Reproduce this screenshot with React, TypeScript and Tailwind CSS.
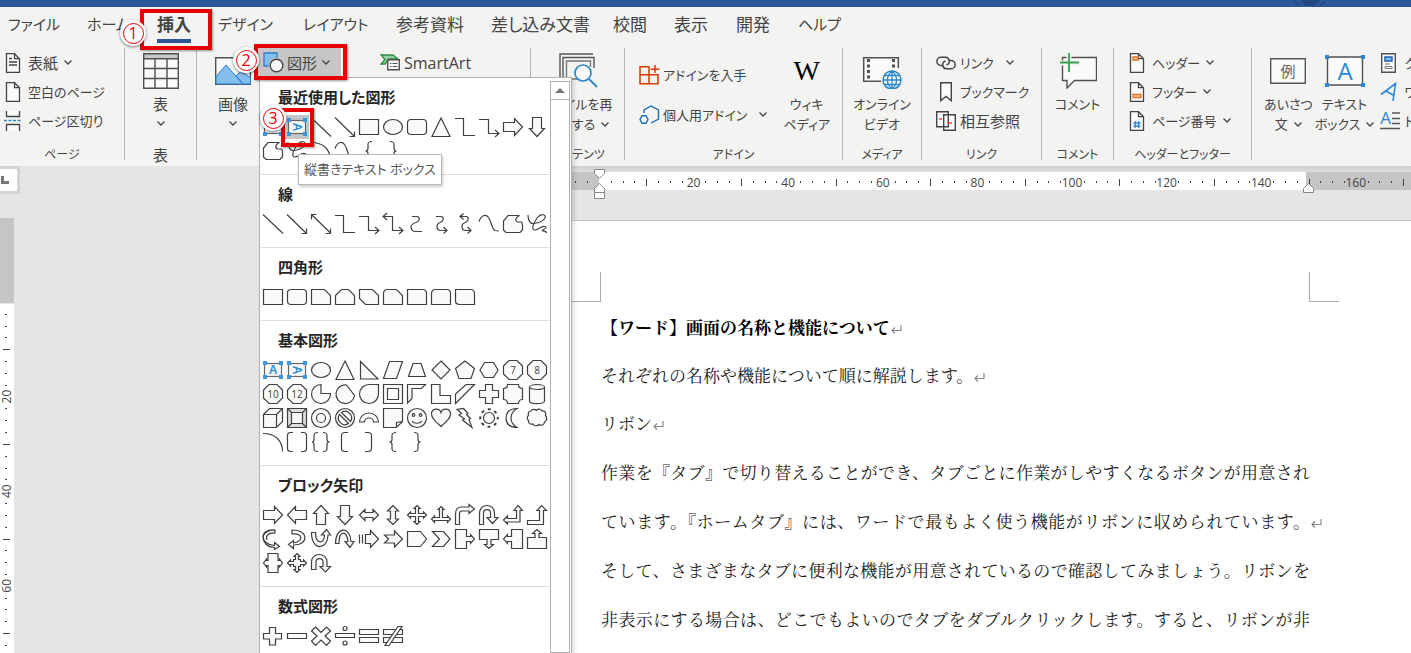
import React from "react";

const UI = "font-['Open_Sans','Noto_Sans_CJK_JP',sans-serif] [font-feature-settings:'palt']";

/* ---------- shape gallery ---------- */

const N = { fill: "none" };

const boxIcon = (vertical: boolean) => (
  <>
    <rect x="3.5" y="5.5" width="17" height="13" stroke="#666" fill="#f7f7f7" />
    <g fill="#3a96dd" stroke="none">
      <rect x="2" y="3" width="4" height="4" />
      <rect x="18" y="3" width="4" height="4" />
      <rect x="2" y="17" width="4" height="4" />
      <rect x="18" y="17" width="4" height="4" />
    </g>
    <text
      x="12"
      y="16"
      textAnchor="middle"
      fontSize="12"
      fontWeight="700"
      fill="#2b8fd6"
      stroke="none"
      fontFamily="Liberation Sans"
      transform={vertical ? "rotate(90 12 12)" : undefined}
    >
      A
    </text>
  </>
);

const OCT = "M8 2.5h8l5.5 5.5v8L16 21.5H8L2.5 16V8z";
const polyNum = (n: string) => (
  <>
    <path d={OCT} />
    <text x="12" y="15.5" textAnchor="middle" fontSize="10" fill="#444" stroke="none">
      {n}
    </text>
  </>
);

const S: Record<string, React.ReactNode> = {
  tb: boxIcon(false),
  vtb: boxIcon(true),
  line: <path {...N} d="M2 2.5l20 19" />,
  lineArrow: <path {...N} d="M2 2.5l19 18.5M21.5 16.5v5h-5" />,
  lineBoth: <path {...N} d="M3 3l18.5 18M21.5 16.5v5h-5M2.5 7.5v-5h5" />,
  rect: <path d="M2.5 4.5h19v15h-19z" />,
  oval: <ellipse cx="12" cy="12" rx="9.5" ry="7.5" />,
  round: <rect x="2.5" y="4.5" width="19" height="15" rx="3.5" />,
  tri: <path d="M12 3l9 18.500H3z" />,
  elbow: <path {...N} d="M2 3.5h8.500v17H22" />,
  elbowArrow: <path {...N} d="M2 4.500h9.500v14H21M18 15l4 3.500-4 3.500" />,
  elbowBoth: <path {...N} d="M3 4.500h8.500v14H21M18 15l4 3.500-4 3.500M6 1L2 4.500 6 8" />,
  curve: <path {...N} d="M7 4.500h5c3 0 3 4.500 0 5.500s-6 2-6 5 2 4.500 5 4.500h6" />,
  curveArrow: <path {...N} d="M7 4.500h5c3 0 3 4 0 5.500s-4 2-4 4.500 1 4 4 4h5M14.500 15l3.500 3.500-3.500 3" />,
  curveBoth: <path {...N} d="M8 4.500h5c3 0 3 4 0 5.500s-4 2-4 4.500 1 4 4 4h4M14.500 15l3.500 3.500-3.500 3M10.500 1.500L7 4.500l3.500 3" />,
  free: <path {...N} d="M2 9.500C4 3.500 8.500 1.500 11.500 5.500S15 17.500 18 18.500l4 .5" />,
  shapeFree: <path d="M7 3.500h11.500c-4 2-5 5-2 6.500h4c1.500 1 1 4 1 8l-2.500 2.500H5L2.500 18V9z" />,
  scribble: (
    <path {...N} d="M3 3c0 5 2 9 6 8.500s9-2 11-5.500c1.500-3.500-4-5-7.500-.5S5.500 18 9.500 18s6-4 10-3.500-1 3-2 4 3.500-.5 4 2.500" />
  ),
  arc: <path {...N} d="M2 3.500c12 0 19.500 6.500 19.500 18" />,
  lbrace: <path {...N} d="M15 2.500c-3 0-4 .5-4 3v4c0 1.500-1 2.500-2.500 2.500 1.500 0 2.500 1 2.500 2.500v4c0 2.500 1 3 4 3" />,
  rbrace: <path {...N} d="M9 2.500c3 0 4 .5 4 3v4c0 1.500 1 2.500 2.500 2.500-1.500 0-2.500 1-2.500 2.500v4c0 2.500-1 3-4 3" />,
  snip1: <path d="M2.500 4.500h13l6 6v9h-19z" />,
  snip2: <path d="M2.500 10.500l6-6h7l6 6v9h-19z" />,
  snipDiag: <path d="M2.500 4.500h13l6 6v9h-13l-6-6z" />,
  snipRound: <path d="M2.500 8.500q0-4 4-4h9l6 6v9h-19z" />,
  round1: <path d="M2.500 4.500h15q4 0 4 4v11h-19z" />,
  round2: <path d="M2.500 19.500v-11q0-4 4-4h11q4 0 4 4v11z" />,
  roundDiag: <path d="M2.500 4.500h15q4 0 4 4v11h-15q-4 0-4-4z" />,
  rtri: <path d="M3.500 3.500v17.500h17.500z" />,
  para: <path d="M8.500 3.500h13l-6 17h-13z" />,
  trap: <path d="M8 5.500h8l4.500 13h-17z" />,
  diamond: <path d="M12 3l9 9-9 9-9-9z" />,
  penta: <path d="M12 3l9.500 7.500L18 20.500H6L2.500 10.500z" />,
  hexa: <path d="M7.500 4.500h9l4.500 7.500-4.500 7.500h-9L3 12z" />,
  n7: polyNum("7"),
  n8: polyNum("8"),
  n10: polyNum("10"),
  n12: polyNum("12"),
  pie: <path d="M12 2.500a9.500 9.500 0 1 0 9.500 9H12z" />,
  chord: <path d="M13.500 3a9.300 9.300 0 1 0 8 10.500z" />,
  tear: <path d="M21.500 2.500H12A9.500 9.500 0 1 0 21.500 12z" />,
  frame: (
    <>
      <path d="M2.500 2.500h19v19h-19z" />
      <path d="M6.500 6.500h11v11h-11z" fill="#fff" />
    </>
  ),
  halfFrame: <path d="M2.500 2.500h18l-4 4H7v10l-4.500 4.500z" />,
  lshape: <path d="M2.500 2.500h8.500v11h10.500v8h-19z" />,
  stripe: <path d="M13 2.500h8.500L2.500 21.500V12z" />,
  cross: <path d="M8.500 2.500h7v6h6v7h-6v6h-7v-6h-6v-7h6z" />,
  plaque: <path d="M6.500 2.500h11q0 4 4 4v11q-4 0-4 4h-11q0-4-4-4v-11q4 0 4-4z" />,
  can: (
    <>
      <path d="M4.500 5v14c0 3.500 15 3.500 15 0V5" />
      <ellipse cx="12" cy="5" rx="7.500" ry="2.500" />
    </>
  ),
  cube: <path d="M2.500 8.500l6-6h13v13l-6 6h-13zM2.500 8.500h13v13M15.500 8.500l6-6" />,
  bevel: (
    <>
      <path d="M2.500 2.500h19v19h-19z" fill="#ddd" />
      <path d="M6.500 6.500h11v11h-11zM2.500 2.500l4 4M21.500 2.500l-4 4M2.500 21.500l4-4M21.500 21.500l-4-4" />
    </>
  ),
  donut: (
    <>
      <circle cx="12" cy="12" r="9.500" />
      <circle cx="12" cy="12" r="4.500" fill="#fff" />
    </>
  ),
  no: (
    <>
      <circle cx="12" cy="12" r="9.500" />
      <path d="M8.500 6.500a6.500 6.500 0 0 1 9 9zM6.500 8.500a6.500 6.500 0 0 0 9 9z" fill="#fff" />
    </>
  ),
  blockArc: <path d="M2.500 16a9.500 9 0 0 1 19 0h-5a4.500 4 0 0 0-9 0z" />,
  fold: <path d="M2.500 2.500h19v13l-6 6h-13zM15.500 21.500v-5l6-1" />,
  smile: (
    <>
      <circle cx="12" cy="12" r="9.500" />
      <circle cx="8.500" cy="9" r="1.300" />
      <circle cx="15.500" cy="9" r="1.300" />
      <path {...N} d="M7 15c2 3 8 3 10 0" />
    </>
  ),
  heart: <path d="M12 20.500C6 15 2.500 12 2.500 8c0-6 8-6.500 9.500-1.500C13.500 1.500 21.500 2 21.500 8c0 4-3.500 7-9.500 12.500z" />,
  bolt: <path d="M10.500 2.500l4.500 5-1.500 1 4 4-1.500 1 3 8-9.500-7.500 2-1-5.500-4 2.500-1.500L4 3.500z" />,
  sun: (
    <>
      <circle cx="12" cy="12" r="5.500" />
      <path
        {...N}
        strokeWidth="2"
        strokeDasharray="3 3.872"
        strokeDashoffset="1.500"
        d="M20.750 12A8.750 8.750 0 1 1 3.250 12A8.750 8.750 0 1 1 20.750 12"
      />
    </>
  ),
  moon: <path d="M16 2.500C7 2.500 5 8 5 12s2 9.500 11 9.500c-5-3-6-6-6-9.500s1-6.500 6-9.500z" />,
  cloud: (
    <path d="M6 5c1-2 4-2 5.500-.5 2-2 5-1.500 5.500.5 3-.5 4.500 2 3.500 4.500 2 2 1.500 5.500-1 6.500 0 3-3.500 4-5.500 2.500-2 2-5 1.500-6-.5-3 .5-5-1-4.500-3.500-2-1.500-1.500-4 0-5-1-2.500.5-4.500 2.500-4.500z" />
  ),
  brackets: <path {...N} d="M8 2.500H5.500q-3 0-3 3v13q0 3 3 3H8M16 2.500h2.500q3 0 3 3v13q0 3-3 3H16" />,
  braces: (
    <path {...N} d="M9 2.500c-3 0-4 .5-4 3v4c0 1.500-.5 2.500-2 2.500 1.500 0 2 1 2 2.500v4c0 2.500 1 3 4 3M14 2.500c3 0 4 .5 4 3v4c0 1.500.5 2.500 2.500 2.500-2 0-2.500 1-2.500 2.500v4c0 2.500-1 3-4 3" />
  ),
  lbracket: <path {...N} d="M15 2.500h-3q-3.500 0-3.500 3v13q0 3 3.500 3h3" />,
  rbracket: <path {...N} d="M8 2.500h3q3.500 0 3.500 3v13q0 3-3.500 3H8" />,
  aRight: <path d="M2.500 7.500h11v-4L21.500 12l-8 8.500v-4h-11z" />,
  aLeft: <path d="M21.500 7.500h-11v-4L2.500 12l8 8.500v-4h11z" />,
  aUp: <path d="M7.500 21.500v-11h-3L12 2.500l7.500 8h-3v11z" />,
  aDown: <path d="M7.500 2.500v11h-3l7.500 8 7.500-8h-3v-11z" />,
  aLR: <path d="M2.500 12L8 6.500v3h8v-3l5.500 5.500L16 17.500v-3H8v3z" />,
  aUD: <path d="M12 2.500L6.500 8h3v8h-3l5.500 5.500 5.500-5.500h-3V8h3z" />,
  aQuad: <path d="M12 2.500l3 3h-1.500v5h5V9l3 3-3 3v-1.500h-5v5H15l-3 3-3-3h1.500v-5h-5V15l-3-3 3-3v1.500h5v-5H9z" />,
  aTri: <path d="M12 3.500l3 3h-1.500v8h5V13l3 3-3 3.500v-2h-13v2l-3-3.500 3-3v1.500h5v-8H9z" />,
  aBent: <path d="M2.500 21.500V11c0-5 2-7 6-7H16V1.500L21.500 6 16 10.500V8H9c-2 0-2.500 1-2.500 3v10.500z" />,
  aU: <path d="M2.500 21.500V10c0-10 15-10 15 0v4.500h3.500l-5.500 6-5.500-6h3.500V10c0-4.500-7-4.500-7 0v11.500z" />,
  aLU: <path d="M2.500 17l4-4v2.500h9v-8h-2.500l4-5 4.500 5h-2.500v11.500H6.500V21z" />,
  aBU: <path d="M2.500 17.500h12v-10h-2.500l4.500-5 5 5h-3v14h-16z" />,
  cRight: <path d="M14 3C-1.500 3-1.500 17 13.500 18.500V15.500l5 4-5 3v-2C-1 20-3 1 14 3v3C6 5.500 4.500 10 6 13" />,
  cLeft: <path d="M7 3c17 0 17 15 1.500 15V21.500L3.500 17.500l5-4V16c11-2 9-10-1.500-9z" />,
  cUp: <path d="M2.500 5.500h4c0 12 9 12 9 2.500h-3l5-5.500 4 5.500h-2.500c0 15-16.500 17-16.500-2.500z" />,
  cDown: <path d="M2.500 16.500C2.500-1 17.500-1 18 14.500h3l-4 6-5-6h3C14 3 6 3 6 16.500z" />,
  aStriped: <path d="M2.500 7.500v9M5.500 7.500v9M8.500 7.500h5v-4l8 8.500-8 8.500v-4h-5z" />,
  aNotch: <path d="M3.500 8h10V4l8 8-8 8v-4h-10l4-4z" />,
  pentagonArrow: <path d="M2.500 4.500h13l6 7.500-6 7.500h-13z" />,
  chevronArrow: <path d="M3.500 4.500h11l6.500 7.500-6.500 7.500h-11l7-7.500z" />,
  coRight: <path d="M2.500 2.500h11v7h4V7.500l4 4.500-4 4.500v-2h-4v7h-11z" />,
  coDown: <path d="M2.500 2.500h19v10h-7.500v5h2.500l-4.500 4-4.500-4H10v-5H2.500z" />,
  coLeft: <path d="M21.500 2.500h-11v7h-4V7.500L2.500 12l4 4.500v-2h4v7h11z" />,
  coUp: <path d="M2.500 21.500h19v-11H14v-4h2.500l-4.500-4-4.500 4H10v4H2.500z" />,
  coLR: <path d="M7 2.500h10v7h1.500V8l3 4-3 4v-1.500H17v7H7v-7H5.500V16l-3-4 3-4v1.500H7z" />,
  coQuad: <path d="M12 2.500l3 3h-1.500v3h2v2h3V9l3 3-3 3v-1.500h-3v2h-2v3H15l-3 3-3-3h1.500v-3h-2v-2h-3V15l-3-3 3-3v1.500h3v-2h2v-3H9z" />,
  cu: <path d="M2.500 18.500V11c0-10 15.500-10 15.500 0v4.500h3.500l-5 5.500-5.500-5.500h3V11c0-4.500-7-4.500-7 0v7.500z" />,
  mPlus: <path d="M8.500 3.500h6v6h6v5.500h-6v6h-6v-6h-6V9.500h6z" />,
  mMinus: <path d="M2.500 9.500h19v5h-19z" />,
  mTimes: <path d="M6.500 3L12 8.500 17.500 3l4 4L16 12l5.500 5-4 4.500L12 16l-5.500 5.500-4-4.500L8 12 2.500 7z" />,
  mDiv: (
    <>
      <path d="M2.500 9.500h19v4h-19z" />
      <circle cx="12" cy="4.500" r="2" />
      <circle cx="12" cy="19" r="2" />
    </>
  ),
  mEq: <path d="M2.500 5.500h19v5h-19zM2.500 13.500h19v5h-19z" />,
  mNeq: (
    <>
      <path d="M2.500 5.500h19v5h-19zM2.500 13.500h19v5h-19z" />
      <path d="M17 2.500h4L8 21.500H4z" />
    </>
  ),
};

const SECTIONS: { title: string; rows: string }[] = [
  {
    title: "最近使用した図形",
    rows: "tb vtb line lineArrow rect oval round tri elbow elbowArrow aRight aDown shapeFree scribble arc free lbrace rbrace",
  },
  {
    title: "線",
    rows: "line lineArrow lineBoth elbow elbowArrow elbowBoth curve curveArrow curveBoth free shapeFree scribble",
  },
  { title: "四角形", rows: "rect round snip1 snip2 snipDiag snipRound round1 round2 roundDiag" },
  {
    title: "基本図形",
    rows: "tb vtb oval tri rtri para trap diamond penta hexa n7 n8 n10 n12 pie chord tear frame halfFrame lshape stripe cross plaque can cube bevel donut no blockArc fold smile heart bolt sun moon cloud arc brackets braces lbracket rbracket lbrace rbrace",
  },
  {
    title: "ブロック矢印",
    rows: "aRight aLeft aUp aDown aLR aUD aQuad aTri aBent aU aLU aBU cRight cLeft cUp cDown aStriped aNotch pentagonArrow chevronArrow coRight coDown coLeft coUp coLR coQuad cu",
  },
  { title: "数式図形", rows: "mPlus mMinus mTimes mDiv mEq mNeq" },
];

function ShapePanel() {
  return (
    <div className="absolute bottom-0 left-[259px] top-[77px] z-10 flex w-[313px] overflow-hidden border border-b-0 border-[#b3b3b3] bg-white shadow-[2px_2px_4px_rgba(0,0,0,0.15)]">
      <div className="mr-px w-[289px] shrink-0 pl-px">
        {SECTIONS.map((s, i) => (
          <section
            key={s.title}
            className={"pb-[11px] pt-[7px] " + (i ? "border-t border-[#dcdcdc]" : "")}
          >
            <h3 className="h-6 pl-[17px] text-[15px] font-bold leading-6 text-[#262626]">{s.title}</h3>
            <div className="mt-[6px] grid grid-cols-12">
              {s.rows.split(" ").map((k, j) => (
                <button
                  key={j}
                  aria-label={k}
                  className={"h-6 w-6 " + (i === 0 && j === 1 ? "bg-[#c6c6c6]" : "")}
                >
                  <svg width="24" height="24" viewBox="0 0 24 24" fill="#fafafa" stroke="#404040" strokeWidth="1.200">
                    {S[k]}
                  </svg>
                </button>
              ))}
            </div>
          </section>
        ))}
      </div>
      <div className="mt-[3px] flex w-5 flex-col border border-[#b0b0b0]">
        <button aria-label="上へスクロール" className="flex h-[18px] items-center justify-center border-b border-[#b0b0b0]">
          <svg width="10" height="5" viewBox="0 0 10 5">
            <path d="M5 0l5 5H0z" fill="#777" />
          </svg>
        </button>
      </div>
    </div>
  );
}

/* ---------- ribbon ---------- */

const Chevron = () => (
  <svg className="shrink-0" width="8" height="5" viewBox="0 0 8 5" fill="none" stroke="#444" strokeWidth="1.300">
    <path d="M.5.5L4 4 7.500.5" />
  </svg>
);

function Page({ children }: { children?: React.ReactNode }) {
  return (
    <svg width="18" height="20" viewBox="0 0 18 20" fill="#fafafa" stroke="#444" strokeWidth="1.300">
      <path d="M2.500.7h8l5 5v13.600h-13zM10.500.7v5h5" />
      {children}
    </svg>
  );
}

type SmallProps = { icon: React.ReactNode; text: string; chevron?: boolean; wide?: boolean; large?: boolean };

function Small({ icon, text, chevron, wide, large }: SmallProps) {
  return (
    <button
      className={"flex h-[29px] items-center whitespace-nowrap leading-5 " + (large ? "text-[15px]" : "text-[13px]")}
    >
      <span className="flex w-6 shrink-0 items-center">{icon}</span>
      {text}
      {chevron && (
        <span className={wide ? "ml-3" : "ml-[6px]"}>
          <Chevron />
        </span>
      )}
    </button>
  );
}

type BigProps = { icon: React.ReactNode; lines: string[]; chevron?: boolean; below?: boolean };

function Big({ icon, lines, chevron, below }: BigProps) {
  return (
    <button
      className={"flex flex-col items-center whitespace-nowrap leading-5 " + (below ? "text-[15px]" : "text-[13px]")}
    >
      <span className="flex h-[46px] items-center justify-center">{icon}</span>
      {lines.map((l, i) => (
        <span key={l} className="flex h-5 items-center gap-[6px]">
          {l}
          {chevron && i === lines.length - 1 && <Chevron />}
        </span>
      ))}
      {below && (
        <span className="flex h-[18px] items-center">
          <Chevron />
        </span>
      )}
    </button>
  );
}

type GroupProps = { w: string; label: string; children: React.ReactNode; last?: boolean; kanji?: boolean };

function Group({ w, label, children, last, kanji }: GroupProps) {
  return (
    <section className={"flex h-[112px] shrink-0 flex-col " + (last ? "" : "border-r border-[#b4b4b4] ") + w}>
      <div className="flex h-[97px] shrink-0">{children}</div>
      <div className={"shrink-0 whitespace-nowrap text-center leading-5 " + (kanji ? "text-[15px]" : "text-[12px]")}>
        {label}
      </div>
    </section>
  );
}

const TableIcon = () => (
  <svg width="36" height="36" viewBox="0 0 36 36" fill="#fafafa" stroke="#505050" strokeWidth="1.400">
    <path d="M.7.700h34.600v34.600H.7z" />
    <path d="M.7.700h34.600v5H.7z" fill="#c8c8c8" />
    <path d="M.7 15.500h34.600M.7 25.500h34.600M12 5.700v29.600M24 5.700v29.600" />
  </svg>
);

const PictureIcon = () => (
  <svg width="36" height="28" viewBox="0 0 36 28">
    <path d="M.7.700h34.600v26.600H.7z" fill="#fafafa" stroke="#505050" strokeWidth="1.400" />
    <path d="M1 19.500L11 8l17 19H1zM21 19l5-5 9.500 7v6H28z" fill="#83beec" stroke="#2b7cd3" />
  </svg>
);

const ShapesIcon = () => (
  <svg width="21" height="21" viewBox="0 0 21 21">
    <path d="M1 1h13v13H1z" fill="#83beec" stroke="#2b7cd3" strokeWidth="1.300" />
    <circle cx="13.500" cy="13.500" r="8" fill="#c6c6c6" />
    <circle cx="13.500" cy="13.500" r="6.300" fill="#fafafa" stroke="#444" strokeWidth="1.400" />
  </svg>
);

const SmartArtIcon = () => (
  <svg width="20" height="17" viewBox="0 0 20 17">
    <path d="M1 1h12l5 4H9l-4 5H1l4-4.500z" fill="#8fd3a0" stroke="#2e8b46" strokeWidth="1.300" />
    <path d="M7.700 5.700h11.600v10H7.700z" fill="#fafafa" stroke="#505050" strokeWidth="1.400" />
    <path d="M10 9.500h1.500M12.500 9.500h5M10 12.500h1.500M12.500 12.500h5" stroke="#505050" />
  </svg>
);

const ReuseIcon = () => (
  <svg width="40" height="36" viewBox="0 0 40 36" fill="none" stroke="#555" strokeWidth="1.400">
    <path d="M2 24V1h33M5 24V4.500h31V15" />
    <path d="M8.500 24V8h24v6M8.500 26h13" stroke="#777" />
    <circle cx="25" cy="20" r="8" fill="#fafafa" stroke="#2b88c8" strokeWidth="1.700" />
    <path d="M31 26l8 8" stroke="#2b88c8" strokeWidth="1.800" />
  </svg>
);

const AddinIcon = () => (
  <svg width="21" height="20" viewBox="0 0 21 20" fill="none" stroke="#d83b01" strokeWidth="1.500">
    <path d="M10.500 1.700H1v17h18v-9H1M10 1.700v17M16 0v8M11.500 4.200h9" />
  </svg>
);

const MyAddinIcon = () => (
  <svg width="21" height="20" viewBox="0 0 21 20" fill="none" stroke="#1a6fb8" strokeWidth="1.400">
    <path d="M5 8V5l7-4 7.500 4v9L12 18M3 10.700h4l2 3.800-2 3.800H3L1 14.500z" />
  </svg>
);

const VideoIcon = () => (
  <svg width="40" height="36" viewBox="0 0 40 36" fill="none">
    <path d="M19 28.300H1.700V4.700h34.600V15" stroke="#505050" strokeWidth="1.500" fill="#fafafa" />
    <path d="M6.500 6v22M31.500 6v9" stroke="#505050" strokeWidth="3" strokeDasharray="3 2.500" />
    <circle cx="30" cy="27" r="9" fill="#fafafa" stroke="#2b88c8" strokeWidth="1.500" />
    <path d="M21 27h18M23 22.500h14M23 31.500h14M30 18v18M30 18c-6 5-6 13 0 18M30 18c6 5 6 13 0 18" stroke="#2b88c8" strokeWidth="1.300" />
  </svg>
);

const LinkIcon = () => (
  <svg width="20" height="14" viewBox="0 0 20 14" fill="none" stroke="#444" strokeWidth="1.500">
    <path d="M7.500 9.500H5A4 4 0 0 1 5 1.200h4.500a4 4 0 0 1 1 7.800M12.500 4.500H15a4 4 0 0 1 0 8.300h-4.500a4 4 0 0 1-1-7.800" />
  </svg>
);

const BookmarkIcon = () => (
  <svg className="ml-1" width="12" height="20" viewBox="0 0 12 20" fill="#fafafa" stroke="#444" strokeWidth="1.400">
    <path d="M.7.700h10.600v18L6 14.500.7 18.700z" />
  </svg>
);

const CrossRefIcon = () => (
  <svg width="20" height="20" viewBox="0 0 20 20" fill="#fafafa" stroke="#444" strokeWidth="1.400">
    <path d="M.7.700h11.600v15H.7zM7.700 3.700h11.600v15.600H7.700z" />
    <path d="M3 8h3M11 12h5" stroke="#f04848" strokeWidth="1.600" />
  </svg>
);

const CommentIcon = () => (
  <svg width="38" height="36" viewBox="0 0 38 36">
    <path d="M3.500 4.500h34v23h-22l-7.500 7.500v-7.500H3.500z" fill="#fafafa" stroke="#505050" strokeWidth="1.400" />
    <path d="M10 0v20M0 10h20" stroke="#f3f3f2" strokeWidth="5" />
    <path d="M10 0v19M1 9.500h19" stroke="#39a04f" strokeWidth="1.800" />
  </svg>
);

const GreetingIcon = () => (
  <svg width="36" height="26" viewBox="0 0 36 26">
    <path d="M.7.700h34.600v24.600H.7z" fill="#fafafa" stroke="#555" strokeWidth="1.400" />
    <text x="18" y="18.500" textAnchor="middle" fontSize="15" fill="#666">
      例
    </text>
  </svg>
);

const TextBoxIcon = () => (
  <svg width="40" height="34" viewBox="0 0 40 34">
    <path d="M2.500 3h35v28h-35z" fill="#fafafa" stroke="#505050" strokeWidth="1.400" />
    <g fill="#2b88d8">
      <path d="M0 1h4v4H0zM36 1h4v4h-4zM0 29h4v4H0zM36 29h4v4h-4z" />
    </g>
    <text x="20" y="25.500" textAnchor="middle" fontSize="24" fill="#2b88d8">
      A
    </text>
  </svg>
);

const WordArtIcon = () => (
  <svg width="18" height="20" viewBox="0 0 18 20" fill="none" stroke="#2b88d8" strokeWidth="1.600">
    <path d="M1 12.500L15.500 1.500 13 19M6 9l8 4.500" />
  </svg>
);

const DropCapIcon = () => (
  <svg width="20" height="20" viewBox="0 0 20 20">
    <text x="5.500" y="13" textAnchor="middle" fontSize="17" fill="#2b88d8">
      A
    </text>
    <path d="M12 2h8M12 7.500h8M12 12.500h8M0 17.500h20" stroke="#555" strokeWidth="1.300" />
  </svg>
);

const TABS: [string, string][] = [
  ["ファイル", "w-[79px] text-[15px]"],
  ["ホーム", "w-[70px] text-[15px]"],
  ["挿入", "w-[61px] text-[17px]"],
  ["デザイン", "w-[85px] text-[15px]"],
  ["レイアウト", "w-[93px] text-[15px]"],
  ["参考資料", "w-[95px] text-[17px]"],
  ["差し込み文書", "w-[122px] text-[17px]"],
  ["校閲", "w-[61px] text-[17px]"],
  ["表示", "w-[62px] text-[17px]"],
  ["開発", "w-[62px] text-[17px]"],
  ["ヘルプ", "w-[60px] text-[15px]"],
];

function Ribbon() {
  return (
    <header className="shrink-0 bg-[#f3f3f2] text-[#444]">
      <div className="flex h-[7px] justify-end bg-[#2b579a] pr-[84px]">
        <svg width="34" height="7" viewBox="0 0 34 7">
          <path d="M7 0h20l-6 6H13z" fill="#234a80" />
          <path d="M1 1l5 5M32 1l-5 5" stroke="#234a80" strokeWidth="2" />
        </svg>
      </div>
      <nav className="flex h-[41px] pl-2">
        {TABS.map(([t, w]) => (
          <div key={t} className={"shrink-0 " + w}>
            <button
              className={
                "h-9 whitespace-nowrap border-b-4 pt-[3px] leading-[29px] " +
                (t === "挿入" ? "border-[#2b579a] font-bold" : "border-transparent")
              }
            >
              {t}
            </button>
          </div>
        ))}
      </nav>
      <div className="flex h-[118px] overflow-hidden">
        <Group w="w-[125px]" label="ページ">
          <div className="flex flex-col pl-1">
            <Small icon={<Page><path d="M5 5.500h3M5 9h8M5 12h8" /></Page>} text="表紙" chevron large />
            <Small icon={<Page />} text="空白のページ" />
            <Small
              icon={
                <svg width="18" height="20" viewBox="0 0 18 20" fill="none" stroke="#444" strokeWidth="1.300">
                  <path d="M2.500 0v5.500h13V0M2.500 20v-6.500h13V20" fill="#fafafa" />
                  <path d="M0 9.500h18" stroke="#2b88c8" strokeWidth="1.500" strokeDasharray="3 1.500" />
                </svg>
              }
              text="ページ区切り"
            />
          </div>
        </Group>
        <Group w="w-[72px]" label="表" kanji>
          <div className="flex w-full justify-center">
            <Big icon={<TableIcon />} lines={["表"]} below />
          </div>
        </Group>
        <Group w="w-[334px]" label="図" kanji>
          <div className="flex pl-[18px]">
            <Big icon={<PictureIcon />} lines={["画像"]} below />
            <button className="ml-[6px] flex h-[29px] w-[84px] items-center bg-[#c6c6c6] pl-[6px] text-[15px] leading-5">
              <ShapesIcon />
              <span className="ml-[3px] mr-[5px]">図形</span>
              <Chevron />
            </button>
            <button className="ml-[39px] flex h-[29px] items-center gap-1 text-[16px] leading-5">
              <SmartArtIcon />
              SmartArt
            </button>
          </div>
        </Group>
        <Group w="w-[94px]" label="コンテンツ">
          <div className="flex w-full justify-center">
            <Big icon={<ReuseIcon />} lines={["ファイルを再", "利用する"]} chevron />
          </div>
        </Group>
        <Group w="w-[218px]" label="アドイン">
          <div className="flex flex-col gap-[11px] pl-[14px] pt-3">
            <Small icon={<AddinIcon />} text="アドインを入手" />
            <Small icon={<MyAddinIcon />} text="個人用アドイン" chevron wide />
          </div>
          <div className="ml-auto pr-3">
            <Big
              icon={<span className="font-['Liberation_Serif',serif] text-[28px] leading-8 text-black">W</span>}
              lines={["ウィキ", "ペディア"]}
            />
          </div>
        </Group>
        <Group w="w-[79px]" label="メディア">
          <div className="flex w-full justify-center">
            <Big icon={<VideoIcon />} lines={["オンライン", "ビデオ"]} />
          </div>
        </Group>
        <Group w="w-[120px]" label="リンク">
          <div className="flex flex-col pl-[14px]">
            <Small icon={<LinkIcon />} text="リンク" chevron wide />
            <Small icon={<BookmarkIcon />} text="ブックマーク" />
            <Small icon={<CrossRefIcon />} text="相互参照" large />
          </div>
        </Group>
        <Group w="w-[72px]" label="コメント">
          <div className="flex w-full justify-center">
            <Big icon={<CommentIcon />} lines={["コメント"]} />
          </div>
        </Group>
        <Group w="w-[138px]" label="ヘッダーとフッター">
          <div className="flex flex-col pl-[14px]">
            <Small icon={<Page><path d="M5 4h5v3H5z" stroke="#e07020" fill="#fcd9b8" /></Page>} text="ヘッダー" chevron />
            <Small icon={<Page><path d="M5 12.500h8v3H5z" stroke="#e07020" fill="#fcd9b8" /></Page>} text="フッター" chevron />
            <Small
              icon={<Page><path d="M7.500 10l-.5 7M11 10l-.5 7M5.500 12h7M5.500 15h7" stroke="#2b88d8" /></Page>}
              text="ページ番号"
              chevron
            />
          </div>
        </Group>
        <Group w="w-[160px]" label="" last>
          <div className="flex pl-3">
            <Big icon={<GreetingIcon />} lines={["あいさつ", "文"]} chevron />
            <div className="ml-[2px]">
              <Big icon={<TextBoxIcon />} lines={["テキスト", "ボックス"]} chevron />
            </div>
            <div className="ml-[6px] flex flex-col">
              <Small
                icon={
                  <svg width="18" height="20" viewBox="0 0 18 20">
                    <path d="M1.700.7h13.600v18.600H1.700z" fill="#fafafa" stroke="#505050" strokeWidth="1.400" />
                    <path d="M5 4h7v4H5z" fill="#83beec" stroke="#1a5fb4" strokeWidth="1.500" />
                    <path d="M5 11h5M5 13.500h7v2H5z" fill="none" stroke="#777" />
                  </svg>
                }
                text="クイック パーツ"
                chevron
              />
              <Small icon={<WordArtIcon />} text="ワードアート" chevron />
              <Small icon={<DropCapIcon />} text="ドロップ キャップ" chevron />
            </div>
          </div>
        </Group>
      </div>
    </header>
  );
}

/* ---------- rulers and document ---------- */

const PITCH = 94.6;

function HRuler() {
  const marks: React.ReactNode[] = [];
  for (let i = -2; i < 70; i++) {
    if (i === 0) continue;
    const x = 99 + (i * PITCH) / 8;
    if (i > 0 && i % 8 === 0) {
      marks.push(
        <text key={i} x={x} y="14.500" textAnchor="middle" fontSize="12" fill="#444">
          {(i / 8) * 20}
        </text>,
      );
    } else {
      const long = i % 4 === 0;
      marks.push(<rect key={i} x={Math.round(x)} y={long ? 7 : 9} width="1" height={long ? 7 : 2} fill="#444" />);
    }
  }
  return (
    <svg className="block h-[28px] w-full" fill="none">
      <rect width="100%" height="18" fill="#c5c5c5" />
      <rect x="99" width="707" height="18" fill="#fff" />
      {marks}
      <g fill="#fff" stroke="#888">
        <path d="M94.500-2.500h10v4l-5 5-5-5zM94.500 20.500v-4l5-5 5 5v4zM94.500 20.500h10v6h-10z" />
        <path d="M803.500 20.500v-4l5-5 5 5v4z" />
      </g>
    </svg>
  );
}

function VRuler() {
  const marks: React.ReactNode[] = [];
  for (let i = 1; i < 60; i++) {
    const y = 84 + (i * PITCH) / 8;
    if (i % 8 === 0) {
      marks.push(
        <text key={i} x="0" y="0" transform={`translate(11 ${y}) rotate(-90)`} textAnchor="middle" fontSize="12" fill="#444">
          {(i / 8) * 20}
        </text>,
      );
    } else {
      const long = i % 4 === 0;
      marks.push(<rect key={i} x={long ? 3 : 5} y={Math.round(y)} width={long ? 7 : 2} height="1" fill="#444" />);
    }
  }
  return (
    <svg className="block w-[14px] flex-1">
      <rect width="14" height="85" fill="#c5c5c5" />
      <rect y="86" width="14" height="100%" fill="#fff" />
      {marks}
    </svg>
  );
}

const Mark = () => (
  <svg className="ml-px inline-block" width="11" height="10" viewBox="0 0 11 10" fill="none" stroke="#888" strokeWidth="1.200">
    <path d="M10 0v5.500H1M4 2.500l-3 3 3 3" />
  </svg>
);

function Workspace() {
  return (
    <main className="flex min-h-0 flex-1 bg-[#e5e5e5]">
      <div className="flex w-5 shrink-0 flex-col">
        <div className="mb-6 flex h-[28px] items-center border-[3px] border-l-0 border-[#d3d3d3] bg-white">
          <svg width="10" height="8" viewBox="0 0 10 8">
            <path d="M1 0h3v5h5v3H1z" fill="#777" />
          </svg>
        </div>
        <VRuler />
      </div>
      <div className="flex min-w-0 flex-1 flex-col pl-[480px]">
        <div className="h-[6px] shrink-0 bg-gradient-to-b from-[#cfcfcf] to-[#dddddd]" />
        <div className="mb-[20px] shrink-0 [&>svg]:overflow-visible">
          <HRuler />
        </div>
        <article className="min-h-0 flex-1 overflow-hidden border-t border-[#c3c3c3] bg-white pl-[71px] pt-[51px]">
          <div className="flex w-[768px] justify-between">
            <span className="h-[30px] w-[30px] border-b border-r border-[#aaa]" />
            <span className="h-[30px] w-[30px] border-b border-l border-[#aaa]" />
          </div>
          <div className="ml-[30px] mt-[1px] w-[709px] font-['Noto_Serif_CJK_JP','Noto_Sans_CJK_JP',serif] text-[17px] leading-[49px] text-[#222] [font-feature-settings:normal]">
            <h1 className="whitespace-nowrap font-bold leading-[48px] text-black">
              【ワード】画面の名称と機能について
              <Mark />
            </h1>
            <p className="leading-[48px]">
              それぞれの名称や機能について順に解説します。
              <Mark />
            </p>
            <p className="leading-[48px]">
              リボン
              <Mark />
            </p>
            <div className="flex">
              <p className="w-[709px] shrink-0 text-justify [text-align-last:justify]">
                作業を『タブ』で切り替えることができ、タブごとに作業がしやすくなるボタンが用意されています。『ホームタブ』には、ワードで最もよく使う機能がリボンに収められています。
              </p>
              <span className="self-end">
                <Mark />
              </span>
            </div>
            <p className="text-justify">
              そして、さまざまなタブに便利な機能が用意されているので確認してみましょう。リボンを非表示にする場合は、どこでもよいのでタブをダブルクリックします。すると、リボンが非表示になります。
            </p>
          </div>
        </article>
      </div>
    </main>
  );
}

/* ---------- step callouts ---------- */

function Step({ n, pos, frame }: { n: number; pos: string; frame: string }) {
  return (
    <>
      <span className={"pointer-events-none absolute z-20 border-4 border-[#e60000] shadow-[1px_1px_2px_rgba(0,0,0,0.4)] " + frame} />
      <span
        className={
          "pointer-events-none absolute z-30 flex h-[26px] w-[26px] items-center justify-center rounded-full bg-white shadow-[0_1px_3px_rgba(0,0,0,0.5)] " +
          pos
        }
      >
        <span className="flex h-[21px] w-[21px] items-center justify-center rounded-full border border-[#e60000] text-[16px] leading-5 text-[#e60000]">
          {n}
        </span>
      </span>
    </>
  );
}

export default function App() {
  return (
    <div className={"relative flex h-screen flex-col overflow-hidden " + UI}>
      <Ribbon />
      <Workspace />
      <ShapePanel />
      <div
        role="tooltip"
        className="absolute left-[298px] top-[154px] z-20 whitespace-nowrap border border-[#b8b8b8] bg-white px-[5px] text-[13px] leading-[29px] text-[#575757] shadow-[1px_2px_3px_rgba(0,0,0,0.2)]"
      >
        縦書きテキスト ボックス
      </div>
      <Step n={1} pos="left-[120px] top-[20px]" frame="left-[140px] top-[9px] h-[41px] w-[72px]" />
      <Step n={2} pos="left-[233px] top-[47px]" frame="left-[254px] top-[44px] h-[36px] w-[93px]" />
      <Step n={3} pos="left-[260px] top-[105px]" frame="left-[281px] top-[108px] h-[39px] w-[33px]" />
    </div>
  );
}
